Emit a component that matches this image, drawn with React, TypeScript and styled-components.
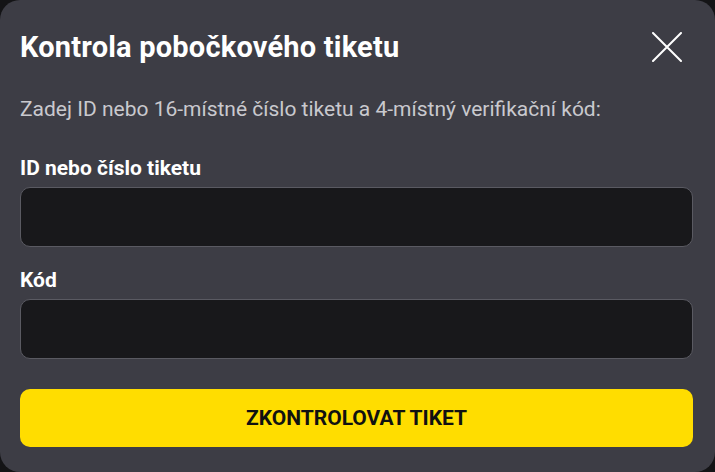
import React from "react";
import styled, { createGlobalStyle } from "styled-components";

const Global = createGlobalStyle`
  html, body { margin: 0; padding: 0; background: #141416; }
  * { box-sizing: border-box; }
`;

const Modal = styled.div`
  width: 715px;
  height: 472px;
  background: #3d3d45;
  border-radius: 20px;
  padding: 20px 22px 25px 20px;
  font-family: Roboto, "Liberation Sans", sans-serif;
  color: #fff;
  display: flex;
  flex-direction: column;
`;

const Header = styled.div`
  display: flex;
  align-items: center;
  justify-content: space-between;
  height: 54px;
`;

const Title = styled.h2`
  margin: 0;
  font-size: 29px;
  font-weight: 700;
  letter-spacing: 0.2px;
`;

const CloseButton = styled.button`
  background: none;
  border: 0;
  padding: 0;
  width: 32px;
  height: 32px;
  margin-right: 10px;
  display: flex;
  align-items: center;
  justify-content: center;
  cursor: pointer;
`;

const Description = styled.p`
  margin: 22px 0 0;
  font-size: 21px;
  line-height: 28px;
  color: #c9c9ce;
`;

const Field = styled.div<{ $top: number }>`
  display: flex;
  flex-direction: column;
  margin-top: ${(p) => p.$top}px;
`;

const Label = styled.label`
  font-size: 21px;
  font-weight: 700;
  line-height: 28px;
  margin-bottom: 5px;
`;

const Input = styled.input`
  height: 60px;
  border-radius: 10px;
  border: 1px solid #5a5a62;
  background: #18181b;
  color: #fff;
  font-size: 18px;
  padding: 0 16px;
  outline: none;
  font-family: inherit;
`;

const Submit = styled.button`
  margin-top: 30px;
  height: 59px;
  border: 0;
  border-radius: 10px;
  background: #ffdd00;
  color: #111;
  font-family: Roboto, "Liberation Sans", sans-serif;
  font-size: 21px;
  font-weight: 700;
  text-transform: uppercase;
  cursor: pointer;
`;

export default function App() {
  return (
    <>
      <Global />
      <Modal>
        <Header>
          <Title>Kontrola pobočkového tiketu</Title>
          <CloseButton aria-label="Zavřít">
            <svg width="30" height="30" viewBox="0 0 30 30">
              <path d="M1 1 L29 29 M29 1 L1 29" stroke="#fff" strokeWidth="2" strokeLinecap="round" />
            </svg>
          </CloseButton>
        </Header>
        <Description>
          Zadej ID nebo 16-místné číslo tiketu a 4-místný verifikační kód:
        </Description>
        <Field $top={31}>
          <Label>ID nebo číslo tiketu</Label>
          <Input />
        </Field>
        <Field $top={19}>
          <Label>Kód</Label>
          <Input />
        </Field>
        <Submit>Zkontrolovat tiket</Submit>
      </Modal>
    </>
  );
}
